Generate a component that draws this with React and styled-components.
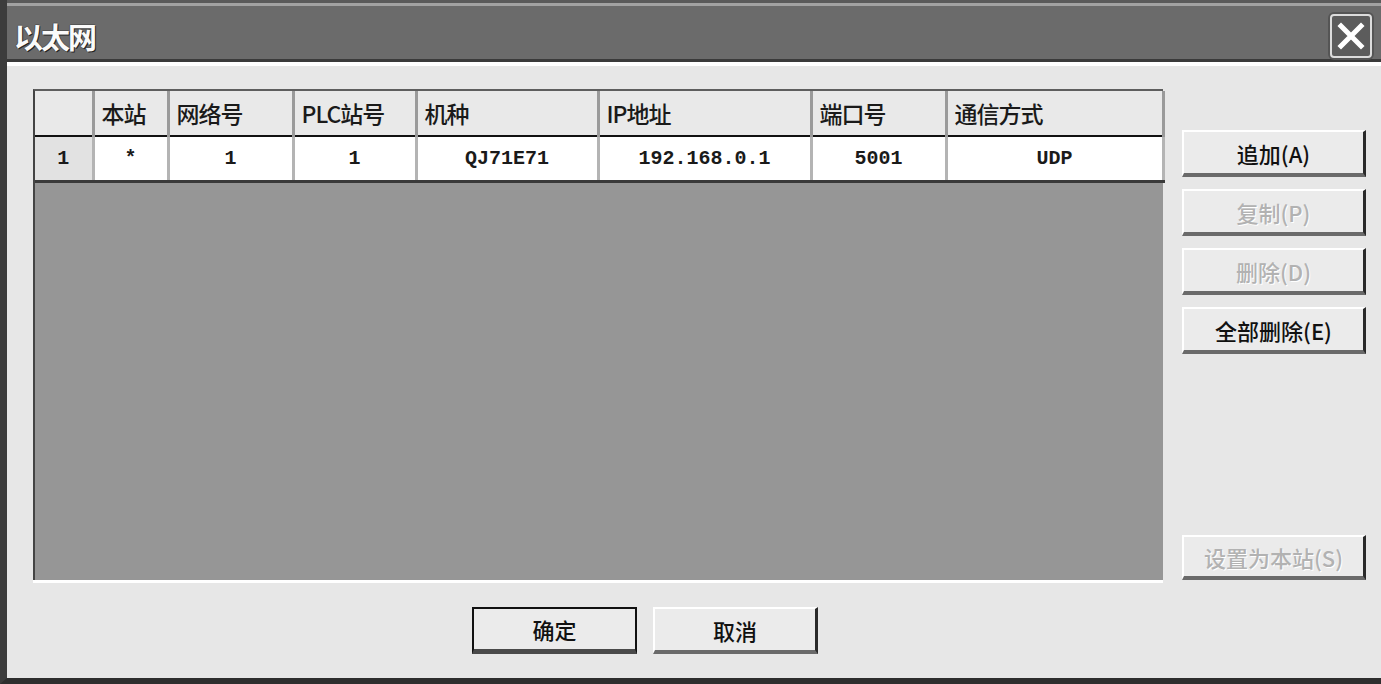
import React from 'react';
import styled, { createGlobalStyle } from 'styled-components';

const GlobalStyle = createGlobalStyle`
  html, body {
    margin: 0;
    padding: 0;
    background: #e6e6e6;
  }
  body {
    font-family: "Noto Sans CJK SC", "Liberation Sans", sans-serif;
  }
`;

const Window = styled.div`
  width: 1381px;
  height: 684px;
  box-sizing: border-box;
  display: flex;
  flex-direction: column;
  background: #e7e7e7;
  border-left: 7px solid #3c3c3c;
  border-bottom: 6px solid #2e2e2e;
  overflow: hidden;
`;

const TitleBar = styled.div`
  height: 62px;
  box-sizing: border-box;
  display: flex;
  align-items: center;
  justify-content: space-between;
  padding: 6px 9px 0 7px;
  background: #6b6b6b;
  border-top: 3px solid #5a5a5a;
  box-shadow: inset 0 3px 0 #a2a2a2, inset 0 -3px 0 #3a3a3a;
`;

const Title = styled.span`
  color: #fafafa;
  font-size: 29px;
  font-weight: 700;
  letter-spacing: -2px;
  text-shadow: 1px 1px 0 #222, -1px 0 0 #555, 0 -1px 0 #555;
`;

const CloseButton = styled.div`
  width: 42px;
  height: 44px;
  box-sizing: border-box;
  border: 2px solid #dcdcdc;
  border-radius: 4px;
  background: #5c5c5c;
  display: flex;
  align-items: center;
  justify-content: center;
  box-shadow: 0 0 0 2px #555;
`;

const Body = styled.div`
  flex: 1;
  display: flex;
  flex-direction: column;
  padding: 23px 0 0 26px;
  border-top: 4px solid #ffffff;
`;

const MainRow = styled.div`
  display: flex;
  gap: 19px;
`;

const TableFrame = styled.div`
  width: 1130px;
  height: 491px;
  box-sizing: border-box;
  background: #969696;
  border-top: 2px solid #5e5e5e;
  border-left: 2px solid #444;
  box-shadow: 0 3px 0 #ffffff;
`;

const Grid = styled.table`
  border-collapse: collapse;
  table-layout: fixed;
  width: 1128px;
`;

const HeadCell = styled.th`
  height: 44px;
  padding: 0 0 0 7px;
  background: #e9e9e9;
  color: #1a1a1a;
  font-size: 23px;
  font-weight: 500;
  letter-spacing: -1px;
  text-align: left;
  border-right: 3px solid #9a9a9a;
  border-bottom: 2px solid #111;
  white-space: nowrap;
  overflow: hidden;
`;

const Cell = styled.td`
  height: 43px;
  padding: 0;
  background: ${(p) => (p.$rowHead ? '#e2e2e2' : '#ffffff')};
  color: #1a1a1a;
  font-family: "Liberation Mono", "DejaVu Sans Mono", monospace;
  font-size: 20px;
  font-weight: 700;
  text-align: center;
  border-right: 3px solid #b4b4b4;
  border-bottom: 3px solid #3a3a3a;
  white-space: nowrap;
`;

const SideColumn = styled.div`
  width: 184px;
  display: flex;
  flex-direction: column;
  padding-top: 41px;
  gap: 12px;
  box-sizing: border-box;
`;

const Button = styled.div`
  width: ${(p) => p.$w || 184}px;
  height: ${(p) => p.$h || 47}px;
  box-sizing: border-box;
  display: flex;
  align-items: center;
  justify-content: center;
  background: #ebebeb;
  border-top: 2px solid #ffffff;
  border-left: 2px solid #ffffff;
  border-right: 3px solid #2a2a2a;
  border-bottom: 4px solid #6a6a6a;
  font-size: 22px;
  font-weight: 500;
  color: ${(p) => (p.$disabled ? '#b2b2b2' : '#111')};
  text-shadow: ${(p) => (p.$disabled ? '1px 1px 0 #fff' : 'none')};
  ${(p) =>
    p.$default &&
    `
    border: 2px solid #111;
    border-bottom: 5px solid #4a4a4a;
  `}
`;

const Spacer = styled.div`
  flex: 1;
`;

const BottomRow = styled.div`
  display: flex;
  gap: 16px;
  padding: 27px 0 0 439px;
`;

const columns = [
  { w: 58, label: '' },
  { w: 75, label: '本站' },
  { w: 125, label: '网络号' },
  { w: 123, label: 'PLC站号' },
  { w: 182, label: '机种' },
  { w: 213, label: 'IP地址' },
  { w: 135, label: '端口号' },
  { w: 217, label: '通信方式' },
];

const row = ['1', '*', '1', '1', 'QJ71E71', '192.168.0.1', '5001', 'UDP'];

const App = () => {
  return (
    <>
      <GlobalStyle />
      <Window>
        <TitleBar>
          <Title>以太网</Title>
          <CloseButton>
            <svg width="30" height="30" viewBox="0 0 30 30">
              <path d="M5 5 L25 25 M25 5 L5 25" stroke="#fff" strokeWidth="5" strokeLinecap="square" />
            </svg>
          </CloseButton>
        </TitleBar>
        <Body>
          <MainRow>
            <TableFrame>
              <Grid>
                <colgroup>
                  {columns.map((c, i) => (
                    <col key={i} style={{ width: c.w }} />
                  ))}
                </colgroup>
                <thead>
                  <tr>
                    {columns.map((c, i) => (
                      <HeadCell key={i}>{c.label}</HeadCell>
                    ))}
                  </tr>
                </thead>
                <tbody>
                  <tr>
                    {row.map((v, i) => (
                      <Cell key={i} $rowHead={i === 0}>
                        {v}
                      </Cell>
                    ))}
                  </tr>
                </tbody>
              </Grid>
            </TableFrame>
            <SideColumn>
              <Button>追加(A)</Button>
              <Button $disabled>复制(P)</Button>
              <Button $disabled>删除(D)</Button>
              <Button>全部删除(E)</Button>
              <Spacer />
              <Button $disabled $h={45}>设置为本站(S)</Button>
            </SideColumn>
          </MainRow>
          <BottomRow>
            <Button $default $w={165} $h={47}>确定</Button>
            <Button $w={165} $h={47}>取消</Button>
          </BottomRow>
        </Body>
      </Window>
    </>
  );
};

export default App;
